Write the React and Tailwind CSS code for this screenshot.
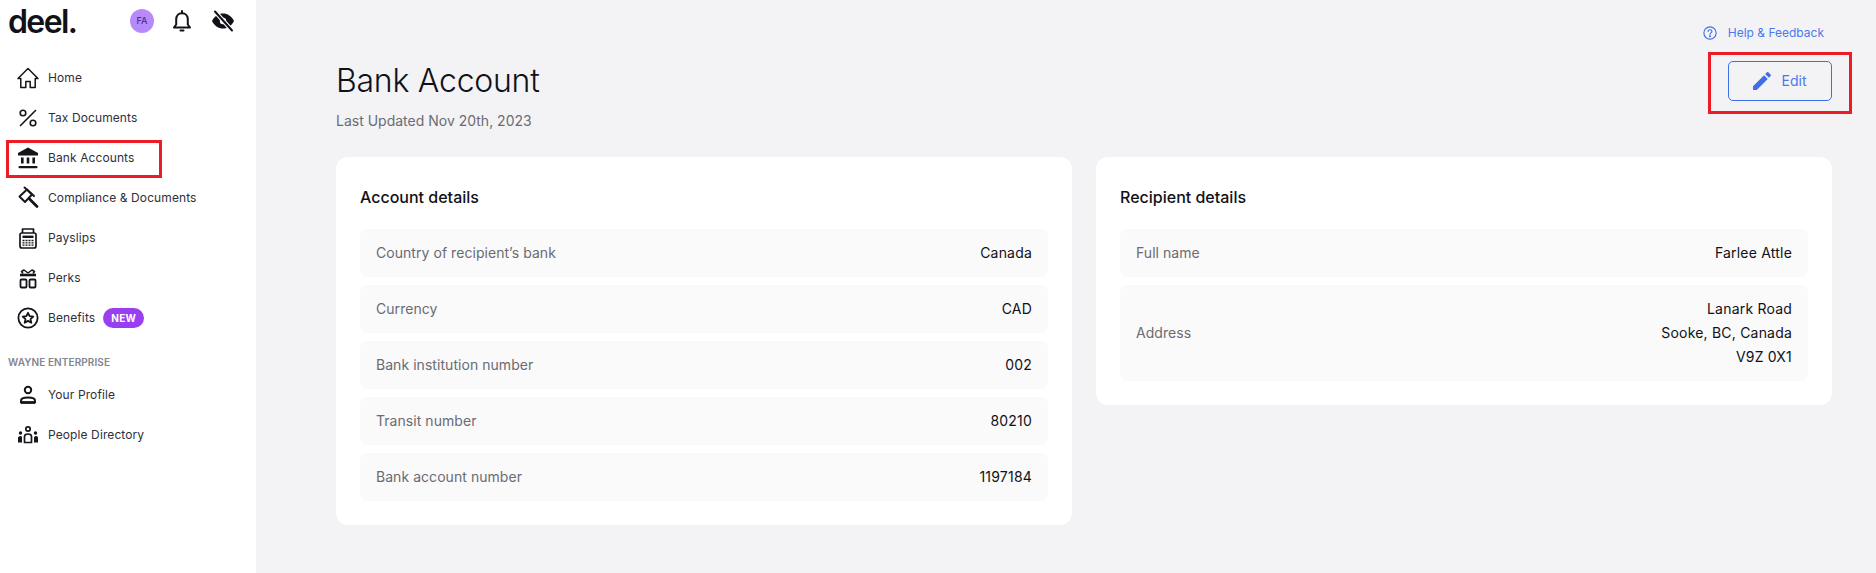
import React from 'react';

const HomeIcon = () => (
  <svg viewBox="0 0 24 24" className="w-6 h-6" fill="none" stroke="#15151a" strokeWidth="1.500" strokeLinejoin="round">
    <path d="M12 2.500 2 12.500h2.800V21.500h5V15.500h4.400v6h5v-9h2.800z" />
  </svg>
);

const PercentIcon = () => (
  <svg viewBox="0 0 24 24" className="w-6 h-6" fill="none" stroke="#15151a" strokeWidth="1.600" strokeLinecap="round">
    <path d="M19.500 4.500 4.500 19.500" />
    <circle cx="7" cy="7" r="2.800" />
    <circle cx="17" cy="17" r="2.800" />
  </svg>
);

const BankIcon = () => (
  <svg viewBox="0 0 24 24" className="w-6 h-6" fill="#15151a">
    <path d="M12 1.500 2 7v2.500h20V7z" />
    <rect x="5" y="11.500" width="2.600" height="6" />
    <rect x="10.700" y="11.500" width="2.600" height="6" />
    <rect x="16.400" y="11.500" width="2.600" height="6" />
    <rect x="2.500" y="20" width="19" height="2.200" rx="1" />
  </svg>
);

const GavelIcon = () => (
  <svg viewBox="0 0 24 24" className="w-6 h-6" fill="none" stroke="#15151a" strokeWidth="1.900" strokeLinejoin="round" strokeLinecap="round">
    <path d="M11 3.500 3.500 10.500 9 16l7-7.500z" />
    <path d="M8.500 1.500 18 10" />
    <path d="m13.500 13 7.500 7.500" strokeWidth="2.800" />
  </svg>
);

const PayslipIcon = () => (
  <svg viewBox="0 0 24 24" className="w-6 h-6" fill="none" stroke="#15151a" strokeWidth="1.700" strokeLinejoin="round">
    <path d="M6.500 7V3h11v4" />
    <rect x="4" y="7" width="16" height="15" rx="2" />
    <path d="M6.500 10.800h11" strokeWidth="2.400" />
    <path d="M6.500 14.500h11M6.500 16.800h11M6.500 19.100h11" strokeWidth="1.300" strokeDasharray="2 1" />
  </svg>
);

const GiftIcon = () => (
  <svg viewBox="0 0 24 24" className="w-6 h-6" fill="none" stroke="#15151a" strokeWidth="1.800" strokeLinejoin="round">
    <path d="M4 9h16" strokeWidth="2.600" />
    <path d="M12 7 8 4 5.500 5.500 7 7.500M12 7l4-3 2.500 1.500L17 7.500" strokeWidth="1.500" />
    <rect x="4.500" y="13.500" width="6" height="8" rx="1" />
    <rect x="13.500" y="13.500" width="6" height="8" rx="1" />
  </svg>
);

const StarIcon = () => (
  <svg viewBox="0 0 24 24" className="w-6 h-6" fill="none" stroke="#15151a" strokeWidth="1.800" strokeLinejoin="round">
    <circle cx="12" cy="12" r="9.600" />
    <path d="m12 6.800 1.600 3.400 3.700.4-2.800 2.500.8 3.700-3.300-1.900-3.300 1.900.8-3.700-2.800-2.500 3.700-.4z" />
  </svg>
);

const PersonIcon = () => (
  <svg viewBox="0 0 24 24" className="w-6 h-6" fill="none" stroke="#15151a" strokeWidth="2" strokeLinejoin="round">
    <circle cx="12" cy="7" r="3.200" />
    <path d="M5 19.500v-1.800c0-2 3-3.200 7-3.200s7 1.200 7 3.200v1.800z" fill="none" />
    <path d="M5 19.500h14" strokeWidth="2.600" />
  </svg>
);

const PeopleIcon = () => (
  <svg viewBox="0 0 24 24" className="w-6 h-6" fill="none" stroke="#15151a" strokeWidth="1.700" strokeLinejoin="round">
    <circle cx="12" cy="6" r="2.200" />
    <path d="M8.500 19.500v-6c0-1.500 1.500-2.500 3.500-2.500s3.500 1 3.500 2.500v6z" />
    <circle cx="4.500" cy="10" r="1.700" fill="#15151a" stroke="none" />
    <circle cx="19.500" cy="10" r="1.700" fill="#15151a" stroke="none" />
    <path d="M2 19.500V15c0-1 1-2 2.500-2S6 14 6 15v4.500zM18 19.500V15c0-1 .5-2 2-2s2 1 2 2v4.500z" fill="#15151a" stroke="none" />
  </svg>
);

const HelpIcon = () => (
  <svg viewBox="0 0 16 16" className="w-[14px] h-[14px]" fill="none" stroke="#3e6fe8" strokeWidth="1.300" strokeLinecap="round">
    <circle cx="8" cy="8" r="7" />
    <path d="M5.800 6.200C5.900 5 6.800 4.300 8 4.300c1.300 0 2.200.8 2.200 1.900 0 1.700-2.200 1.700-2.200 3.300" />
    <circle cx="8" cy="11.700" r=".5" fill="#3e6fe8" />
  </svg>
);

const BellIcon = () => (
  <svg viewBox="0 0 24 24" className="absolute left-[170px] top-[9px] w-6 h-6" fill="none" stroke="#111118" strokeWidth="2" strokeLinejoin="round" strokeLinecap="round">
    <path d="M4 18.500h16l-2.200-3V10.500c0-3.600-2.300-6.300-5.800-6.300s-5.800 2.700-5.800 6.300v5z" />
    <path d="M12 2v2M10.500 21.500h3" />
  </svg>
);

const EyeSlashIcon = () => (
  <svg viewBox="0 0 24 24" className="absolute left-[211px] top-[9px] w-6 h-6">
    <path d="M1 12c2.500-5 6.500-7.500 11-7.500S20.500 7 23 12c-2.500 5-6.500 7.500-11 7.500S3.500 17 1 12z" fill="#111118" />
    <circle cx="12" cy="12" r="3.200" fill="#fff" />
    <path d="M4 2.500 21 21.500" stroke="#fff" strokeWidth="4.200" />
    <path d="M4 2.500 21 21.500" stroke="#111118" strokeWidth="2" strokeLinecap="round" />
  </svg>
);

const EditIcon = () => (
  <svg viewBox="0 0 24 24" className="w-6 h-6" fill="#3e6fe8">
    <path d="M3 17.250V21h3.750L17.810 9.940l-3.750-3.750L3 17.250zM20.710 7.040a1 1 0 0 0 0-1.410l-2.340-2.340a1 1 0 0 0-1.410 0l-1.830 1.830 3.750 3.750 1.830-1.830z" />
  </svg>
);

const navTop = [
  { label: 'Home', Icon: HomeIcon },
  { label: 'Tax Documents', Icon: PercentIcon },
  { label: 'Bank Accounts', Icon: BankIcon },
  { label: 'Compliance & Documents', Icon: GavelIcon },
  { label: 'Payslips', Icon: PayslipIcon },
  { label: 'Perks', Icon: GiftIcon },
  { label: 'Benefits', Icon: StarIcon, badge: 'NEW' },
];

const navBottom = [
  { label: 'Your Profile', Icon: PersonIcon },
  { label: 'People Directory', Icon: PeopleIcon },
];

const accountRows = [
  ['Country of recipient’s bank', 'Canada'],
  ['Currency', 'CAD'],
  ['Bank institution number', '002'],
  ['Transit number', '80210'],
  ['Bank account number', '1197184'],
];

const recipientRows = [
  ['Full name', ['Farlee Attle']],
  ['Address', ['Lanark Road', 'Sooke, BC, Canada', 'V9Z 0X1']],
];

const NavItem = ({ item }) => (
  <div className="h-10 px-4 flex items-center gap-2">
    <item.Icon />
    <span className="text-xs text-[#2f2f3a] tracking-[0.1px]">{item.label}</span>
    {item.badge && (
      <span className="h-5 px-2 rounded-full bg-[#9a3ff0] text-white text-[10px] font-bold tracking-[0.3px] flex items-center">
        {item.badge}
      </span>
    )}
  </div>
);

const DetailCard = ({ title, children }) => (
  <div className="bg-white rounded-xl px-6 pb-6">
    <h2 className="h-[72px] pt-2 flex items-center text-base font-medium text-[#111118]">{title}</h2>
    <div className="flex flex-col gap-2">{children}</div>
  </div>
);

const Row = ({ label, lines }) => (
  <div className="bg-[#fafafa] rounded-lg px-4 py-3 flex items-center justify-between text-sm leading-6">
    <span className="text-[#6b6b74] tracking-[0.05px]">{label}</span>
    <div className="text-right text-[#111118] tracking-[0.2px]">
      {lines.map((l) => (
        <div key={l}>{l}</div>
      ))}
    </div>
  </div>
);

export default function App() {
  return (
    <div className="relative h-[573px] flex overflow-hidden bg-[#f3f3f6] font-['Inter',sans-serif]">
      <aside className="w-[256px] shrink-0 bg-white">
        <div className="h-[58px] relative">
          <span className="absolute left-[8px] top-[-2px] text-[32px] font-semibold tracking-[-1.600px] text-[#111118]">deel.</span>
          <span className="absolute left-[130px] top-[9px] w-6 h-6 rounded-full bg-[#b78afc] text-[#4b2a8a] text-[9px] font-medium flex items-center justify-center">FA</span>
          <BellIcon />
          <EyeSlashIcon />
        </div>
        <nav>
          {navTop.map((item) => (
            <NavItem key={item.label} item={item} />
          ))}
        </nav>
        <div className="pl-2 pt-[17px] pb-[5px] text-[10px] leading-[15px] font-semibold tracking-[0.1px] text-[#85858f]">WAYNE ENTERPRISE</div>
        <nav>
          {navBottom.map((item) => (
            <NavItem key={item.label} item={item} />
          ))}
        </nav>
      </aside>

      <main className="flex-1 pl-20 pr-11">
        <div className="h-[61px] relative">
          <div className="absolute right-2 top-[25px] flex items-center gap-[11px] text-xs text-[#4a78ee]">
            <HelpIcon />
            <span>Help &amp; Feedback</span>
          </div>
        </div>
        <div className="h-[96px] flex items-start justify-between">
          <div>
            <h1 className="text-[32px] leading-10 font-light tracking-[-0.25px] text-[#111118]">Bank Account</h1>
            <p className="mt-[10px] text-sm leading-5 text-[#6b6b74]">Last Updated Nov 20th, 2023</p>
          </div>
          <button className="w-[104px] h-10 pr-1 rounded-[5px] border border-[#3e6fe8] text-[#4a78ee] text-sm flex items-center justify-center gap-2">
            <EditIcon />
            Edit
          </button>
        </div>
        <div className="grid grid-cols-2 gap-6 items-start">
          <DetailCard title="Account details">
            {accountRows.map(([label, value]) => (
              <Row key={label} label={label} lines={[value]} />
            ))}
          </DetailCard>
          <DetailCard title="Recipient details">
            {recipientRows.map(([label, lines]) => (
              <Row key={label} label={label} lines={lines} />
            ))}
          </DetailCard>
        </div>
      </main>

      <div className="absolute left-[6px] top-[140px] w-[156px] h-[38px] border-[3px] border-[#ed1c24]" />
      <div className="absolute left-[1708px] top-[52px] w-[144px] h-[62px] border-[3px] border-[#ed1c24]" />
    </div>
  );
}
